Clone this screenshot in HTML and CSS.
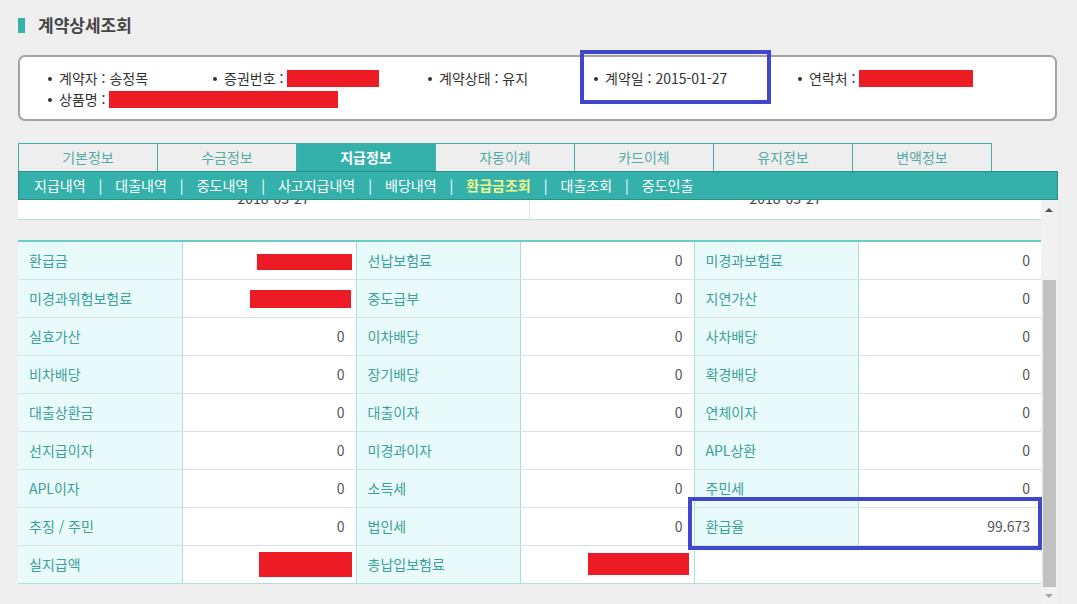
FILE: index.html
```html
<!DOCTYPE html>
<html lang="ko">
<head>
<meta charset="utf-8">
<title>계약상세조회</title>
<link rel="stylesheet" href="styles.css">
</head>
<body>
<div class="page">
  <div class="wrap">
    <div class="title"><span class="title-bar"></span><span class="title-text">계약상세조회</span></div>

    <div class="info">
      <ul class="info-list">
        <li class="w1">계약자 : 송정목</li>
        <li class="w2">증권번호 : <span class="redact r-policy"></span></li>
        <li class="w3">계약상태 : 유지</li>
        <li class="w4">계약일 : 2015-01-27</li>
        <li class="w5">연락처 : <span class="redact r-phone"></span></li>
        <li class="w6">상품명 : <span class="redact r-product"></span></li>
      </ul>
    </div>

    <div class="tabs">
      <div class="tab">기본정보</div>
      <div class="tab">수금정보</div>
      <div class="tab active">지급정보</div>
      <div class="tab">자동이체</div>
      <div class="tab">카드이체</div>
      <div class="tab">유지정보</div>
      <div class="tab">변액정보</div>
    </div>

    <div class="subnav">
      <span class="sub">지급내역</span><span class="sep">|</span>
      <span class="sub">대출내역</span><span class="sep">|</span>
      <span class="sub">중도내역</span><span class="sep">|</span>
      <span class="sub">사고지급내역</span><span class="sep">|</span>
      <span class="sub">배당내역</span><span class="sep">|</span>
      <span class="sub current">환급금조회</span><span class="sep">|</span>
      <span class="sub">대출조회</span><span class="sep">|</span>
      <span class="sub">중도인출</span>
    </div>

    <div class="scroll-area">
      <div class="scroll-content">
        <div class="partial-row">
          <div class="partial-cell"><span class="partial-text">2018-03-27</span></div>
          <div class="partial-cell"><span class="partial-text">2018-03-27</span></div>
        </div>
        <div class="gap"></div>
        <table class="grid">
          <colgroup>
            <col class="c-label"><col class="c-value">
            <col class="c-label"><col class="c-value">
            <col class="c-label"><col class="c-value3">
          </colgroup>
          <tbody>
            <tr><td class="lb">환급금</td><td class="vl"><span class="redact r-a"></span></td><td class="lb">선납보험료</td><td class="vl">0</td><td class="lb">미경과보험료</td><td class="vl">0</td></tr>
            <tr><td class="lb">미경과위험보험료</td><td class="vl"><span class="redact r-b"></span></td><td class="lb">중도급부</td><td class="vl">0</td><td class="lb">지연가산</td><td class="vl">0</td></tr>
            <tr><td class="lb">실효가산</td><td class="vl">0</td><td class="lb">이차배당</td><td class="vl">0</td><td class="lb">사차배당</td><td class="vl">0</td></tr>
            <tr><td class="lb">비차배당</td><td class="vl">0</td><td class="lb">장기배당</td><td class="vl">0</td><td class="lb">확경배당</td><td class="vl">0</td></tr>
            <tr><td class="lb">대출상환금</td><td class="vl">0</td><td class="lb">대출이자</td><td class="vl">0</td><td class="lb">연체이자</td><td class="vl">0</td></tr>
            <tr><td class="lb">선지급이자</td><td class="vl">0</td><td class="lb">미경과이자</td><td class="vl">0</td><td class="lb">APL상환</td><td class="vl">0</td></tr>
            <tr><td class="lb">APL이자</td><td class="vl">0</td><td class="lb">소득세</td><td class="vl">0</td><td class="lb">주민세</td><td class="vl">0</td></tr>
            <tr><td class="lb">추징 / 주민</td><td class="vl">0</td><td class="lb">법인세</td><td class="vl">0</td><td class="lb">환급율</td><td class="vl">99.673</td></tr>
            <tr><td class="lb">실지급액</td><td class="vl"><span class="redact r-c"></span></td><td class="lb">총납입보험료</td><td class="vl"><span class="redact r-d"></span></td><td class="empty" colspan="2"></td></tr>
          </tbody>
        </table>
      </div>
      <div class="scrollbar">
        <div class="sb-btn sb-up"><span class="arrow-up"></span></div>
        <div class="sb-thumb"></div>
        <div class="sb-btn sb-down"><span class="arrow-down"></span></div>
      </div>
    </div>
  </div>

  <div class="highlight hl-date"></div>
  <div class="highlight hl-rate"></div>
</div>
</body>
</html>
```

FILE: styles.css
```css
html, body {
  margin: 0;
  padding: 0;
}
body {
  background: #efefef;
  font-family: "Noto Sans CJK KR", "Noto Sans", sans-serif;
  font-size: 14px;
  color: #333;
}
.page {
  position: relative;
  width: 1077px;
  height: 604px;
  overflow: hidden;
  padding-left: 18px;
  box-sizing: border-box;
}
.wrap {
  width: 1039px;
}

/* title */
.title {
  display: flex;
  align-items: center;
  height: 22px;
  margin-top: 14px;
}
.title-bar {
  width: 7px;
  height: 15px;
  background: #36b1ab;
  margin-right: 13px;
}
.title-text {
  font-size: 17px;
  font-weight: bold;
  color: #454545;
  line-height: 22px;
}

/* info box */
.info {
  margin-top: 19px;
  height: 66px;
  box-sizing: border-box;
  border: 2px solid #a3a3a3;
  border-radius: 7px;
  background: #fff;
  padding: 11px 0 0 28px;
}
.info-list {
  list-style: none;
  margin: 0;
  padding: 0;
  display: flex;
  flex-wrap: wrap;
}
.info-list li {
  display: flex;
  align-items: center;
  height: 21px;
  line-height: 21px;
  white-space: pre;
  color: #333;
  font-size: 14px;
}
.info-list li::before {
  content: "";
  width: 4px;
  height: 4px;
  border-radius: 50%;
  background: #333;
  margin-right: 7px;
}
.w1 { width: 165px; }
.w2 { width: 215px; }
.w3 { width: 166px; }
.w4 { width: 204px; }
.w5 { width: 230px; }
.w6 { width: 400px; }

.redact {
  display: inline-block;
  background: #ed1c24;
  vertical-align: middle;
}
.r-policy { width: 92px; height: 17px; }
.r-phone { width: 114px; height: 17px; }
.r-product { width: 229px; height: 17px; }

/* tabs */
.tabs {
  display: flex;
  margin-top: 22px;
}
.tab {
  width: 140px;
  height: 28px;
  box-sizing: border-box;
  margin-right: -1px;
  border: 1px solid #42aea8;
  border-bottom: none;
  background: #eeeeee;
  color: #52aca7;
  text-align: center;
  line-height: 27px;
  font-size: 14px;
}
.tab.active {
  background: #35b1ab;
  color: #fff;
  font-weight: bold;
}

/* sub navigation */
.subnav {
  display: flex;
  align-items: center;
  height: 29px;
  box-sizing: border-box;
  width: 1040px;
  background: #35b1ab;
  border: 1px solid #298f8a;
  padding-left: 15px;
  color: #fff;
  font-size: 14px;
  line-height: 27px;
}
.sep {
  margin: 0 13px;
}
.sub.current {
  color: #eef78c;
  font-weight: bold;
}

/* scroll area */
.scroll-area {
  display: flex;
  height: 404px;
}
.scroll-content {
  width: 1023px;
  height: 404px;
  overflow: hidden;
}
.partial-row {
  display: flex;
  height: 19px;
  background: #fff;
  border-bottom: 1px solid #b7dfdd;
  overflow: hidden;
}
.partial-cell {
  flex: 1;
  text-align: center;
  border-right: 1px solid #e2e2e2;
  color: #444;
}
.partial-cell:last-child {
  border-right: none;
}
.partial-text {
  display: block;
  font-size: 14px;
  line-height: 19px;
  margin-top: -11px;
}
.gap {
  height: 20px;
}

.grid {
  width: 1023px;
  table-layout: fixed;
  border-collapse: collapse;
  border-top: 2px solid #6ccbc5;
  background: #fff;
}
.c-label { width: 164px; }
.c-value { width: 174px; }
.c-value3 { width: 183px; }
.grid tr {
  height: 38px;
}
.grid td {
  padding: 0 11px;
  border-left: 1px solid #a9dedb;
  border-right: 1px solid #a9dedb;
  border-bottom: 1px solid #d9e3e3;
  font-size: 14px;
  line-height: 18px;
  white-space: nowrap;
  overflow: visible;
}
.grid td:first-child { border-left: none; }
.grid td:last-child { border-right: none; }
.grid tr:last-child td { border-bottom: 1px solid #b3dedb; }
.lb {
  background: #e8fafa;
  color: #3c9f9a;
}
.vl {
  text-align: right;
  color: #555;
}
.empty {
  background: #fff;
}
.r-a { width: 95px; height: 16px; margin-right: -7px; }
.r-b { width: 101px; height: 18px; margin-right: -6px; }
.r-c { width: 93px; height: 25px; margin-right: -7px; }
.r-d { width: 101px; height: 22px; margin-right: -6px; }

/* fake scrollbar */
.scrollbar {
  width: 16px;
  height: 404px;
  background: #f1f1f1;
  display: flex;
  flex-direction: column;
}
.sb-btn {
  display: flex;
  align-items: center;
  justify-content: center;
}
.sb-up { height: 20px; }
.sb-down { height: 17px; }
.arrow-up {
  width: 0;
  height: 0;
  border-left: 4px solid transparent;
  border-right: 4px solid transparent;
  border-bottom: 4px solid #505050;
}
.arrow-down {
  width: 0;
  height: 0;
  border-left: 4px solid transparent;
  border-right: 4px solid transparent;
  border-top: 4px solid #a3a3a3;
}
.sb-thumb {
  margin: 60px 1px 0 2px;
  height: 307px;
  background: #c1c1c1;
}

/* annotation highlights (overlays) */
.highlight {
  position: absolute;
  box-sizing: border-box;
  border: 4px solid #3f48cc;
}
.hl-date {
  left: 580px;
  top: 50px;
  width: 191px;
  height: 54px;
}
.hl-rate {
  left: 688px;
  top: 497px;
  width: 354px;
  height: 53px;
}
```
